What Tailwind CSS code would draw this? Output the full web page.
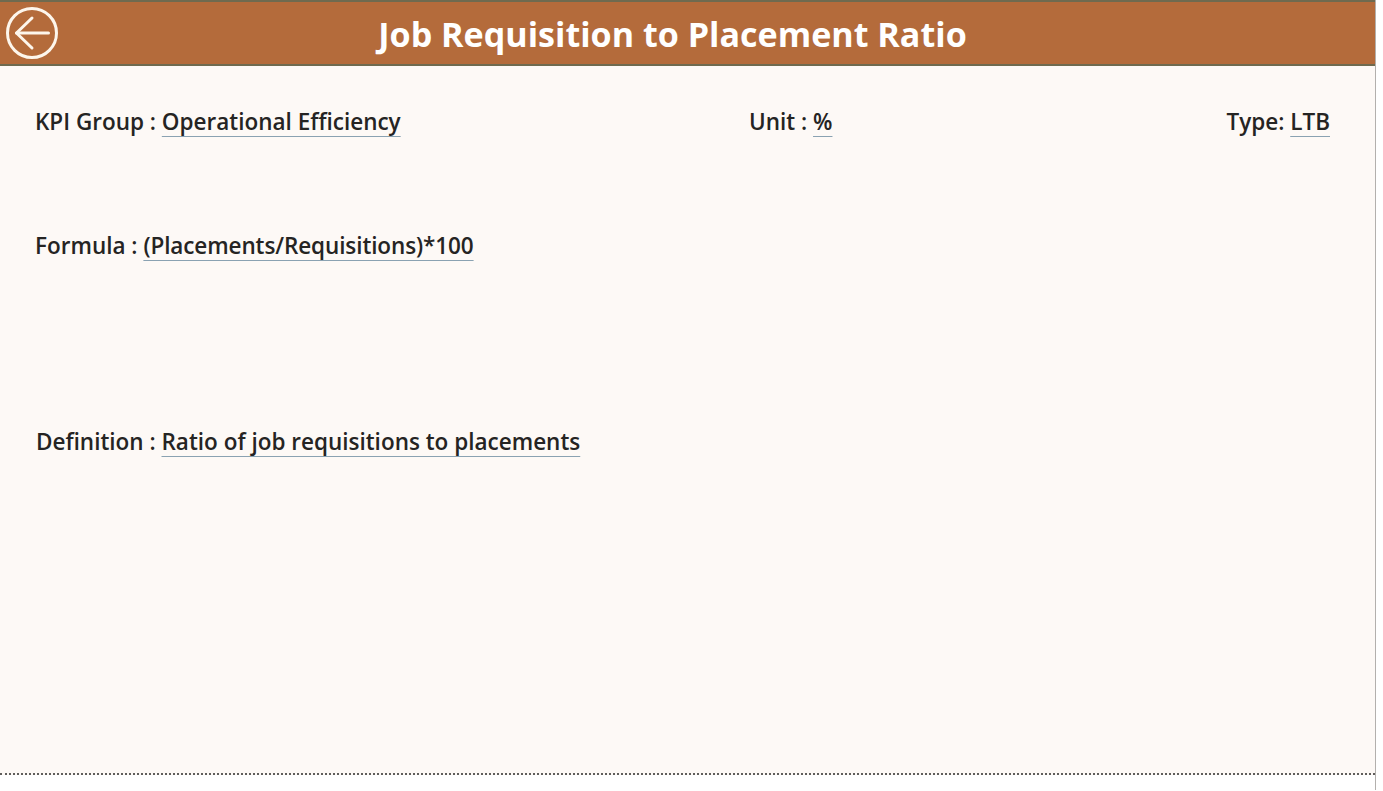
<!DOCTYPE html>
<html lang="en">
<head>
    <meta charset="UTF-8">
    <meta name="viewport" content="width=device-width, initial-scale=1.0">
    <title>Job Requisition to Placement Ratio</title>
    <script src="https://cdn.jsdelivr.net/npm/@tailwindcss/browser@4"></script>
</head>
<body class="h-[791px] overflow-hidden bg-white font-['Open_Sans','Noto_Sans',sans-serif] text-[#252423]">
    <div class="w-[1376px] h-[790px] border-r border-[#b3b0ad]">
        <div class="h-[775px] flex flex-col bg-[#fdf9f6] border-b-2 border-dotted border-[#605e5c]">
            <header class="relative h-[66px] shrink-0 flex items-center justify-center bg-[#b46b3b] border-t-2 border-b-2 border-[#6f6a4f]">
                <svg class="absolute left-[6px] top-[5px]" width="53" height="53" viewBox="0 0 53 53" fill="none" stroke="#fdf6ec" stroke-width="3" stroke-linecap="round" stroke-linejoin="round">
                    <circle cx="26" cy="26" r="24.5"/>
                    <path d="M10.5 26 H42.5"/>
                    <path d="M26 11 L10.5 26 L26 41"/>
                </svg>
                <h1 class="text-[34.1px] font-bold text-white leading-none pr-[30px] pt-[2px]">Job Requisition to Placement Ratio</h1>
            </header>
            <main class="pl-[35px] pr-[45px] text-[22.5px] font-[650] leading-[28px]">
                <div class="flex mt-[42px]">
                    <div class="w-[714px]">KPI Group : <span class="underline decoration-1 underline-offset-[6px] decoration-[#8aa2b2] [text-decoration-skip-ink:none]">Operational Efficiency</span></div>
                    <div>Unit : <span class="underline decoration-1 underline-offset-[6px] decoration-[#8aa2b2] [text-decoration-skip-ink:none]">%</span></div>
                    <div class="ml-auto">Type: <span class="underline decoration-1 underline-offset-[6px] decoration-[#8aa2b2] [text-decoration-skip-ink:none]">LTB</span></div>
                </div>
                <div class="mt-[96px]">Formula : <span class="tracking-[-0.1px] underline decoration-1 underline-offset-[6px] decoration-[#8aa2b2] [text-decoration-skip-ink:none]">(Placements/Requisitions)*100</span></div>
                <div class="mt-[168px] ml-px">Definition : <span class="underline decoration-1 underline-offset-[6px] decoration-[#8aa2b2] [text-decoration-skip-ink:none]">Ratio of job requisitions to placements</span></div>
            </main>
        </div>
    </div>
</body>
</html>
